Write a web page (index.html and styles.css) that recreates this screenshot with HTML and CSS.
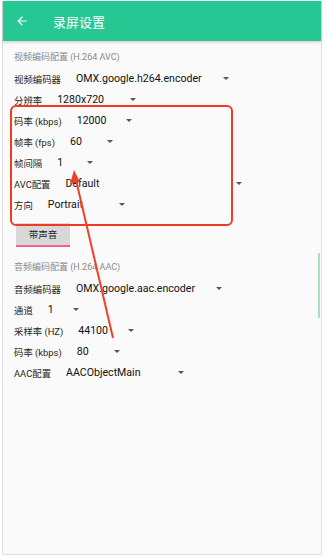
FILE: index.html
```html
<!DOCTYPE html>
<html lang="zh">

<head>
    <meta charset="UTF-8">
    <meta name="viewport" content="width=device-width, initial-scale=1.0">
    <title>录屏设置</title>
    <link rel="stylesheet" href="styles.css">
</head>

<body>
    <div class="screen">
        <div class="toolbar">
            <svg class="back" viewBox="0 0 24 24" width="14" height="14">
                <path d="M20 11H7.83l5.59-5.59L12 4l-8 8 8 8 1.41-1.41L7.83 13H20v-2z" fill="#fff"/>
            </svg>
            <span class="title">录屏设置</span>
        </div>

        <div class="content">
            <div class="section-title">视频编码配置 (H.264 AVC)</div>
            <div class="row">
                <span class="label">视频编码器</span>
                <span class="spinner sp-venc">OMX.google.h264.encoder<i class="caret"></i></span>
            </div>
            <div class="row">
                <span class="label">分辨率</span>
                <span class="spinner sp-res">1280x720<i class="caret"></i></span>
            </div>
            <div class="row">
                <span class="label">码率 (kbps)</span>
                <span class="spinner sp-vbit">12000<i class="caret"></i></span>
            </div>
            <div class="row">
                <span class="label">帧率 (fps)</span>
                <span class="spinner sp-fps">60<i class="caret"></i></span>
            </div>
            <div class="row">
                <span class="label">帧间隔</span>
                <span class="spinner sp-iframe">1<i class="caret"></i></span>
            </div>
            <div class="row">
                <span class="label">AVC配置</span>
                <span class="spinner sp-avc">Default<i class="caret"></i></span>
            </div>
            <div class="row">
                <span class="label">方向</span>
                <span class="spinner sp-orient">Portrait<i class="caret"></i></span>
            </div>

            <button class="toggle">带声音</button>

            <div class="section-title audio">音频编码配置 (H.264 AAC)</div>
            <div class="row">
                <span class="label">音频编码器</span>
                <span class="spinner sp-aenc">OMX.google.aac.encoder<i class="caret"></i></span>
            </div>
            <div class="row">
                <span class="label">通道</span>
                <span class="spinner sp-chan">1<i class="caret"></i></span>
            </div>
            <div class="row">
                <span class="label">采样率 (HZ)</span>
                <span class="spinner sp-rate">44100<i class="caret"></i></span>
            </div>
            <div class="row">
                <span class="label">码率 (kbps)</span>
                <span class="spinner sp-abit">80<i class="caret"></i></span>
            </div>
            <div class="row">
                <span class="label">AAC配置</span>
                <span class="spinner sp-aac">AACObjectMain<i class="caret"></i></span>
            </div>
        </div>

        <div class="scrollbar"></div>
    </div>

    <!-- annotation drawn over the screenshot -->
    <div class="highlight"></div>
    <svg class="pointer" width="326" height="558" viewBox="0 0 326 558">
        <line x1="113" y1="338" x2="76" y2="180" stroke="#f0402a" stroke-width="2"/>
        <polygon points="74,170 70,184 80,182" fill="#f0402a"/>
    </svg>
</body>

</html>
```

FILE: styles.css
```css
body {
    margin: 0;
    background: #fff;
    font-family: Roboto, "Noto Sans CJK SC", sans-serif;
    position: relative;
    width: 326px;
    height: 558px;
    overflow: hidden;
}

.screen {
    position: relative;
    margin-left: 2px;
    width: 318px;
    height: 553px;
    background: #fafafa;
    border: 1px solid #dedede;
    border-top: none;
}

.toolbar {
    height: 40px;
    margin-top: 1px;
    background: #27c793;
    display: flex;
    align-items: center;
    box-shadow: 0 1px 3px rgba(0, 0, 0, 0.2);
}

.back {
    margin-left: 12px;
}

.title {
    margin-left: 24px;
    color: #fff;
    font-size: 13px;
    font-family: "Noto Sans CJK SC", sans-serif;
}

.content {
    padding-left: 11px;
}

.section-title {
    height: 22px;
    margin-top: 5px;
    line-height: 22px;
    font-size: 9px;
    color: #8a8a8a;
}

.section-title.audio {
    margin-top: 9px;
}

.row {
    height: 21px;
    display: flex;
    align-items: center;
}

.label {
    font-size: 9.4px;
    color: #1e1e1e;
}

.spinner {
    margin-left: 15px;
    display: flex;
    align-items: center;
    justify-content: space-between;
    font-size: 10.6px;
    color: #111;
}

.caret {
    width: 0;
    height: 0;
    border-left: 3.5px solid transparent;
    border-right: 3.5px solid transparent;
    border-top: 3.5px solid #555;
}

.sp-venc { width: 153px; }
.sp-res { width: 79px; }
.sp-vbit { width: 55px; }
.sp-fps { width: 43px; }
.sp-iframe { width: 36px; }
.sp-avc { width: 177px; }
.sp-orient { width: 77px; }
.sp-aenc { width: 146px; }
.sp-chan { width: 31px; }
.sp-rate { width: 56px; }
.sp-abit { width: 43px; }
.sp-aac { width: 118px; }

.toggle {
    display: block;
    margin: 8px 0 0 2px;
    width: 54px;
    height: 24px;
    padding: 0;
    border: none;
    border-bottom: 2px solid #f0609a;
    background: #d8d8d8;
    color: #222;
    font-size: 9.5px;
    font-family: "Noto Sans CJK SC", sans-serif;
}

.scrollbar {
    position: absolute;
    right: 1px;
    top: 252px;
    width: 2px;
    height: 65px;
    background: #a6e2bc;
}

.highlight {
    position: absolute;
    left: 10px;
    top: 105px;
    width: 219px;
    height: 117px;
    border: 2px solid #ee3b24;
    border-radius: 6px;
}

.pointer {
    position: absolute;
    left: 0;
    top: 0;
}
```
